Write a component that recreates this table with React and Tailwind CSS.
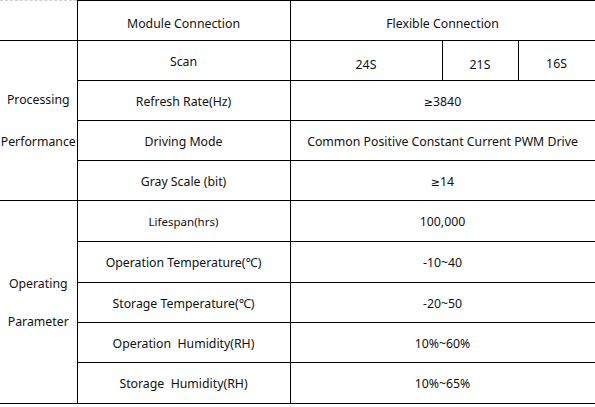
export default function App() {
  const td = "border border-black text-center align-middle p-0 pt-[3px]";
  const lc = "border border-black border-l-0 text-center align-middle p-0";
  const ge = <span style={{ fontFamily: '"DejaVu Sans", sans-serif' }} className="text-[11px]">≥</span>;
  return (
    <div className="w-[595px] h-[407px] bg-white text-[#111] text-[12.3px] leading-none" style={{ fontFamily: '"Noto Sans", "Noto Sans CJK SC", sans-serif' }}>
      <table className="table-fixed border-collapse w-[595px]">
        <colgroup>
          <col className="w-[77px]" />
          <col className="w-[213px]" />
          <col className="w-[152px]" />
          <col className="w-[76px]" />
          <col className="w-[77px]" />
        </colgroup>
        <tbody>
          <tr className="h-[40px]">
            <td className="border-t border-dashed border-t-[#d0d0d0] border-r border-r-black border-b border-b-black p-0"></td>
            <td className={td}><div className="pt-[4px]">Module Connection</div></td>
            <td className={td} colSpan={3}><div className="pt-[4px]">Flexible Connection</div></td>
          </tr>
          <tr className="h-[40px]">
            <td className={lc} rowSpan={4}>
              <div className="flex flex-col gap-[29px] pt-[1px]">
                <span>Processing</span>
                <span>Performance</span>
              </div>
            </td>
            <td className={td}>Scan</td>
            <td className={td}><div className="pt-[7px]">24S</div></td>
            <td className={td}><div className="pt-[7px]">21S</div></td>
            <td className={td}><div className="pt-[4px]">16S</div></td>
          </tr>
          <tr className="h-[40px]">
            <td className={td}>Refresh Rate(Hz)</td>
            <td className={td} colSpan={3}>{ge}3840</td>
          </tr>
          <tr className="h-[40px]">
            <td className={td}>Driving Mode</td>
            <td className={td} colSpan={3}>Common Positive Constant Current PWM Drive</td>
          </tr>
          <tr className="h-[40px]">
            <td className={td}>Gray Scale (bit)</td>
            <td className={td} colSpan={3}>{ge}14</td>
          </tr>
          <tr className="h-[41px]">
            <td className={lc} rowSpan={5}>
              <div className="flex flex-col gap-[25px] pt-[2px]">
                <span>Operating</span>
                <span>Parameter</span>
              </div>
            </td>
            <td className={td}><span className="text-[11.5px]">Lifespan(hrs)</span></td>
            <td className={td} colSpan={3}>100,000</td>
          </tr>
          <tr className="h-[41px]">
            <td className={td}>Operation Temperature(℃)</td>
            <td className={td} colSpan={3}>-10~40</td>
          </tr>
          <tr className="h-[40px]">
            <td className={td}>Storage Temperature(℃)</td>
            <td className={td} colSpan={3}>-20~50</td>
          </tr>
          <tr className="h-[40px]">
            <td className={td}><span className="whitespace-pre">Operation  Humidity(RH)</span></td>
            <td className={td} colSpan={3}>10%~60%</td>
          </tr>
          <tr className="h-[41px]">
            <td className={td}><span className="whitespace-pre">Storage  Humidity(RH)</span></td>
            <td className={td} colSpan={3}>10%~65%</td>
          </tr>
        </tbody>
      </table>
    </div>
  );
}
